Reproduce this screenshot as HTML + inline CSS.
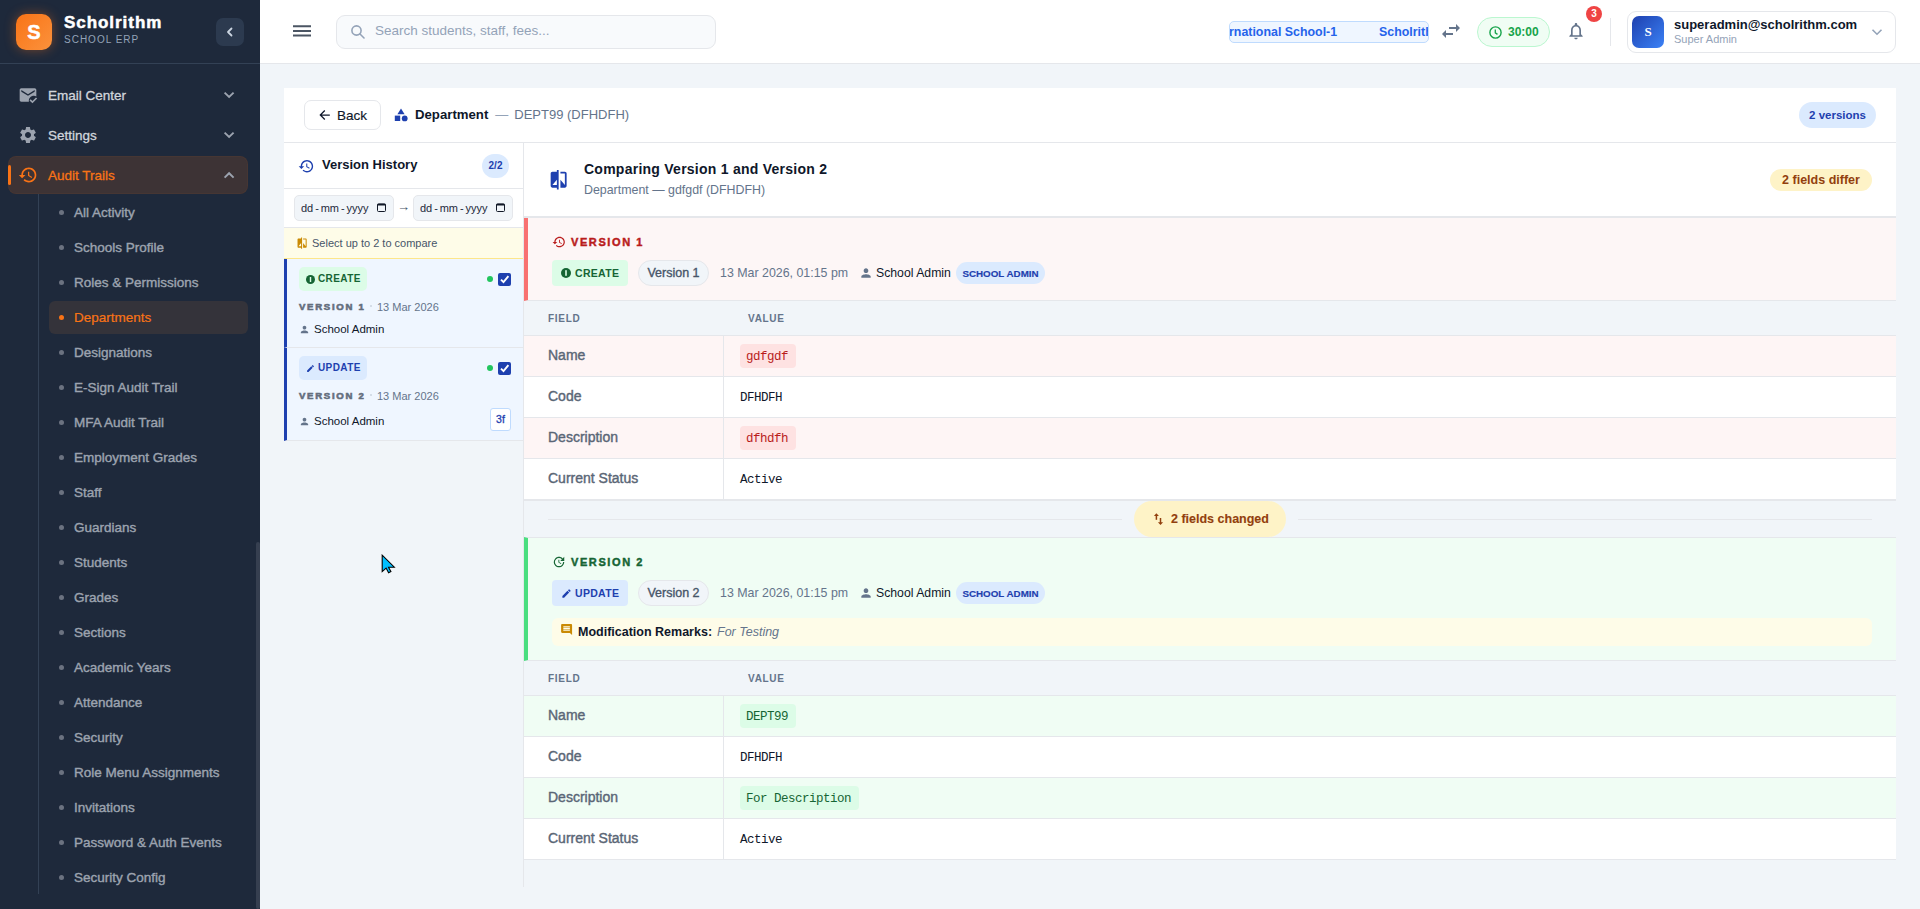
<!DOCTYPE html>
<html><head><meta charset="utf-8">
<style>
*{box-sizing:border-box;margin:0;padding:0}
html,body{width:1920px;height:909px;overflow:hidden;background:#f1f5f9;font-family:"Liberation Sans",sans-serif;color:#0f172a}
.a{position:absolute}
svg{display:block}
#sb{position:absolute;left:0;top:0;width:260px;height:909px;background:#1e293b;overflow:hidden}
#sb .hdr{position:absolute;left:0;top:0;width:260px;height:64px;border-bottom:1px solid #334155}
.logo{position:absolute;left:16px;top:14px;width:36px;height:36px;border-radius:10px;background:linear-gradient(135deg,#f97316,#fb923c);box-shadow:0 0 12px rgba(249,115,22,.4);color:#fff;font-weight:bold;font-size:20px;text-align:center;line-height:37px;-webkit-text-stroke:0.5px #fff}
.brand{position:absolute;left:64px;top:13px;font-size:17px;font-weight:bold;color:#fff;line-height:20px;letter-spacing:0.95px;-webkit-text-stroke:0.5px #fff}
.brand2{position:absolute;left:64px;top:34px;font-size:10px;color:#94a3b8;letter-spacing:1px;line-height:11px}
.collapse{position:absolute;left:216px;top:18px;width:28px;height:28px;border-radius:7px;background:#2c3a4f}
.mi{position:absolute;left:8px;width:240px;height:38px;border-radius:8px}
.mi .t{position:absolute;left:40px;top:1px;line-height:38px;font-size:13.5px;color:#d1d5db;-webkit-text-stroke:0.3px #d1d5db}
.mi svg.ic{position:absolute;left:10px;top:9px}
.mi svg.ch{position:absolute;left:214px;top:14px}
.mi.act{background:#3d3335;box-shadow:inset 0 0 0 1px rgba(249,115,22,.05)}
.mi.act .t{color:#f97316;-webkit-text-stroke:0.3px #f97316}
.mi.act .bar{position:absolute;left:0;top:9px;width:3px;height:20px;background:#f97316;border-radius:2px}
.subline{position:absolute;left:38px;top:194px;width:1px;height:700px;background:#334155}
.sub{position:absolute;left:49px;width:199px;height:33px;border-radius:6px}
.sub .d{position:absolute;left:10px;top:14px;width:5px;height:5px;border-radius:50%;background:#6b7280}
.sub .t{position:absolute;left:25px;top:0;line-height:33px;font-size:13.5px;color:#9ca3af;-webkit-text-stroke:0.4px #9ca3af}
.sub.act{background:#34333a}
.sub.act .d{background:#f97316}
.sub.act .t{color:#f97316;-webkit-text-stroke:0.2px #f97316}
.sbscroll{position:absolute;left:256px;top:542px;width:4px;height:367px;background:#363f50;border-radius:2px}
#top{position:absolute;left:260px;top:0;width:1660px;height:64px;background:#fff;border-bottom:1px solid #e5e7eb}
</style></head><body>
<div id="sb">
  <div class="hdr">
    <div class="logo">S</div>
    <div class="brand">Scholrithm</div>
    <div class="brand2">SCHOOL ERP</div>
    <div class="collapse"><svg width="28" height="28" viewBox="0 0 28 28"><path d="M15.5 10.5l-3.5 3.5 3.5 3.5" stroke="#cbd5e1" stroke-width="1.8" fill="none" stroke-linecap="round" stroke-linejoin="round"/></svg></div>
  </div>
  <div class="mi" style="top:76px"><svg class="ic" width="20" height="20" viewBox="0 0 24 24"><path fill="#9ca3af" d="M13 19c0-3.31 2.69-6 6-6 1.1 0 2.12.3 3 .81V6c0-1.1-.9-2-2-2H4c-1.1 0-2 .9-2 2v12c0 1.1.9 2 2 2h9.09c-.05-.33-.09-.66-.09-1zM4 8V6l8 5 8-5v2l-8 5-8-5zm13.34 14l-3.54-3.54 1.41-1.41 2.12 2.12 4.24-4.24L23 16.34 17.34 22z"/></svg><span class="t">Email Center</span><svg class="ch" width="14" height="10" viewBox="0 0 14 10"><path d="M2.6 2.6L7.1 7 11.6 2.6" stroke="#9ca3af" stroke-width="1.9" fill="none"/></svg></div>
  <div class="mi" style="top:116px"><svg class="ic" width="20" height="20" viewBox="0 0 24 24"><path fill="#9ca3af" d="M19.14 12.94c.04-.3.06-.61.06-.94 0-.32-.02-.64-.07-.94l2.03-1.58c.18-.14.23-.41.12-.61l-1.92-3.32c-.12-.22-.37-.29-.59-.22l-2.39.96c-.5-.38-1.03-.7-1.62-.94l-.36-2.54c-.04-.24-.24-.41-.48-.41h-3.84c-.24 0-.43.17-.47.41l-.36 2.54c-.59.24-1.13.57-1.62.94l-2.39-.96c-.22-.08-.47 0-.59.22L2.74 8.87c-.12.21-.08.47.12.61l2.03 1.58c-.05.3-.09.63-.09.94s.02.64.07.94l-2.03 1.58c-.18.14-.23.41-.12.61l1.92 3.32c.12.22.37.29.59.22l2.39-.96c.5.38 1.03.7 1.62.94l.36 2.54c.05.24.24.41.48.41h3.84c.24 0 .44-.17.47-.41l.36-2.54c.59-.24 1.13-.56 1.62-.94l2.39.96c.22.08.47 0 .59-.22l1.92-3.32c.12-.22.07-.47-.12-.61l-2.01-1.58zM12 15.6c-1.98 0-3.6-1.62-3.6-3.6s1.62-3.6 3.6-3.6 3.6 1.62 3.6 3.6-1.62 3.6-3.6 3.6z"/></svg><span class="t">Settings</span><svg class="ch" width="14" height="10" viewBox="0 0 14 10"><path d="M2.6 2.6L7.1 7 11.6 2.6" stroke="#9ca3af" stroke-width="1.9" fill="none"/></svg></div>
  <div class="mi act" style="top:156px"><span class="bar"></span><svg class="ic" width="20" height="20" viewBox="0 0 24 24"><path fill="#f97316" d="M13 3c-4.97 0-9 4.03-9 9H1l3.89 3.89.07.14L9 12H6c0-3.87 3.13-7 7-7s7 3.13 7 7-3.13 7-7 7c-1.93 0-3.68-.79-4.94-2.06l-1.42 1.42C8.27 19.99 10.51 21 13 21c4.97 0 9-4.03 9-9s-4.03-9-9-9zm-1 5v5l4.28 2.54.72-1.21-3.5-2.08V8H12z"/></svg><span class="t">Audit Trails</span><svg class="ch" width="14" height="10" viewBox="0 0 14 10"><path d="M2.6 7.6L7.1 3.2 11.6 7.6" stroke="#9ca3af" stroke-width="1.9" fill="none"/></svg></div>
  <div class="subline"></div>
<div class="sub" style="top:196px"><span class="d"></span><span class="t">All Activity</span></div>
<div class="sub" style="top:231px"><span class="d"></span><span class="t">Schools Profile</span></div>
<div class="sub" style="top:266px"><span class="d"></span><span class="t">Roles &amp; Permissions</span></div>
<div class="sub act" style="top:301px"><span class="d"></span><span class="t">Departments</span></div>
<div class="sub" style="top:336px"><span class="d"></span><span class="t">Designations</span></div>
<div class="sub" style="top:371px"><span class="d"></span><span class="t">E-Sign Audit Trail</span></div>
<div class="sub" style="top:406px"><span class="d"></span><span class="t">MFA Audit Trail</span></div>
<div class="sub" style="top:441px"><span class="d"></span><span class="t">Employment Grades</span></div>
<div class="sub" style="top:476px"><span class="d"></span><span class="t">Staff</span></div>
<div class="sub" style="top:511px"><span class="d"></span><span class="t">Guardians</span></div>
<div class="sub" style="top:546px"><span class="d"></span><span class="t">Students</span></div>
<div class="sub" style="top:581px"><span class="d"></span><span class="t">Grades</span></div>
<div class="sub" style="top:616px"><span class="d"></span><span class="t">Sections</span></div>
<div class="sub" style="top:651px"><span class="d"></span><span class="t">Academic Years</span></div>
<div class="sub" style="top:686px"><span class="d"></span><span class="t">Attendance</span></div>
<div class="sub" style="top:721px"><span class="d"></span><span class="t">Security</span></div>
<div class="sub" style="top:756px"><span class="d"></span><span class="t">Role Menu Assignments</span></div>
<div class="sub" style="top:791px"><span class="d"></span><span class="t">Invitations</span></div>
<div class="sub" style="top:826px"><span class="d"></span><span class="t">Password &amp; Auth Events</span></div>
<div class="sub" style="top:861px"><span class="d"></span><span class="t">Security Config</span></div>
  <div class="sbscroll"></div>
</div>
<div id="top"></div>
<style>
.ham{left:293px;top:25px}
.search{left:336px;top:15px;width:380px;height:34px;border:1px solid #e5e7eb;border-radius:9px;background:#f8fafc}
.search svg{position:absolute;left:13px;top:8px}
.search .ph{position:absolute;left:38px;top:-1px;line-height:32px;font-size:13.5px;color:#94a3b8}
.marq{left:1229px;top:21px;width:200px;height:22px;border:1px solid #bfdbfe;border-radius:5px;background:#eff6ff;overflow:hidden}
.marq span{position:absolute;top:0;line-height:20px;font-size:12.4px;font-weight:bold;color:#2563eb;white-space:nowrap}
.timer{left:1477px;top:17px;width:73px;height:30px;border:1px solid #bbf7d0;border-radius:15px;background:#f0fdf4}
.timer svg{position:absolute;left:11px;top:8px}
.timer span{position:absolute;left:30px;top:0;line-height:28px;font-size:12px;font-weight:bold;color:#16a34a}
.badge{left:1586px;top:6px;width:16px;height:16px;border-radius:50%;background:#ef4444;color:#fff;font-size:10px;font-weight:bold;text-align:center;line-height:16px}
.vdiv{left:1610px;top:18px;width:1px;height:28px;background:#e5e7eb}
.user{left:1627px;top:11px;width:269px;height:42px;border:1px solid #e5e7eb;border-radius:9px;background:#fff}
.avatar{left:4px;top:4px;width:32px;height:32px;border-radius:7px;background:linear-gradient(135deg,#1e40af,#3b82f6);color:#fff;font-family:"Liberation Serif",serif;font-weight:bold;font-size:13px;text-align:center;line-height:32px}
.uemail{left:46px;top:5px;font-size:13px;font-weight:bold;color:#0f172a;line-height:16px;white-space:nowrap}
.urole{left:46px;top:21px;font-size:11px;color:#94a3b8;line-height:13px}
.card{left:284px;top:88px;width:1612px;height:55px;background:#fff;border-bottom:1px solid #e5e7eb}
.backbtn{left:20px;top:12px;width:77px;height:30px;border:1px solid #e5e7eb;border-radius:7px;background:#fff}
.backbtn svg{position:absolute;left:14px;top:8px}
.backbtn span{position:absolute;left:32px;top:1px;line-height:28px;-webkit-text-stroke:0.15px #0f172a;font-size:13.5px;color:#0f172a}
.crumb{left:131px;top:0;line-height:53px;font-size:13.5px;font-weight:bold;color:#0f172a;white-space:nowrap}
.crumb .g{font-weight:normal;color:#64748b;font-size:13px}
.pillv{left:1515px;top:14px;width:77px;height:26px;border-radius:13px;background:#dbeafe;color:#1e40af;font-size:11.5px;font-weight:bold;text-align:center;line-height:26px}
/* left panel */
.lp{left:284px;top:143px;width:240px;height:744px;border-right:1px solid #e5e7eb}
.lph{left:0;top:0;width:239px;height:46px;background:#fff;border-bottom:1px solid #e5e7eb}
.lph svg{position:absolute}
.lph .t{position:absolute;left:38px;top:-1px;line-height:45px;font-size:13px;font-weight:bold;color:#0f172a}
.lph .cnt{position:absolute;left:198px;top:11px;width:27px;height:24px;border-radius:12px;background:#dbeafe;color:#1e40af;font-size:10px;font-weight:bold;text-align:center;line-height:24px}
.dates{left:0;top:46px;width:239px;height:39px;background:#fff;border-bottom:1px solid #e5e7eb}
.date{top:6px;width:100px;height:26px;border:1px solid #e5e7eb;border-radius:5px;background:#f1f5f9}
.date span{position:absolute;left:6px;top:0;line-height:24px;font-size:11px;color:#1e293b;letter-spacing:0px;white-space:nowrap}
.date i{font-style:normal;margin:0 1.9px}
.date svg{position:absolute;left:82px;top:7px}
.notice{left:0;top:85px;width:239px;height:31px;background:#fefce8;border-bottom:1px solid #fde68a}
.notice svg{position:absolute}
.notice span{position:absolute;left:28px;top:0px;line-height:31px;font-size:11px;color:#475569}
.item{left:0;width:239px;background:#eff6ff;border-bottom:1px solid #e5e7eb;border-left:3px solid #1e40af}
.tag{position:absolute;left:12px;width:68px;height:24px;border-radius:5px;font-size:10px;font-weight:bold;letter-spacing:0.4px;line-height:24px}
.tag.cr{background:#dcfce7;color:#166534}
.tag.up{background:#dbeafe;color:#1e40af}
.tag svg{position:absolute;left:7px;top:8px}
.tag span{position:absolute;left:19px;top:0}
.gdot{position:absolute;left:200px;width:6px;height:6px;border-radius:50%;background:#22c55e}
.chk{position:absolute;left:211px;width:13px;height:13px;border-radius:2px;background:#1e40af}
.chk svg{position:absolute;left:1px;top:1px}
.vlab{position:absolute;left:12px;font-size:9.6px;font-weight:bold;letter-spacing:1.7px;color:#646e7d;line-height:12px;white-space:nowrap;-webkit-text-stroke:0.6px #646e7d}
.vdate{position:absolute;left:90px;font-size:11px;color:#64748b;line-height:12px;white-space:nowrap}
.vdot{position:absolute;left:83px;width:2px;height:2px;border-radius:50%;background:#cbd5e1}
.who{position:absolute;left:12px;font-size:11.5px;color:#0f172a;line-height:13px;white-space:nowrap}
.who svg{position:absolute;left:0px;top:1px}
.who span{position:absolute;left:15px;top:0}
.f3{position:absolute;left:203px;width:21px;height:23px;border:1px solid #bfdbfe;border-radius:3px;background:#fff;color:#1e40af;font-size:10.5px;-webkit-text-stroke:0.3px #1e40af;text-align:center;line-height:21px}
/* compare panel */
.cp{left:524px;top:143px;width:1372px;height:744px}
.cph{left:0;top:0;width:1372px;height:75px;background:#fff;border-bottom:2px solid #e5e7eb}
.cph svg{position:absolute}
.cph .t{position:absolute;left:60px;top:18px;font-size:14px;font-weight:bold;letter-spacing:0.25px;color:#0f172a;line-height:16px;white-space:nowrap}
.cph .s{position:absolute;left:60px;top:40px;font-size:12.4px;color:#64748b;line-height:14px;white-space:nowrap}
.cph .diff{position:absolute;left:1246px;top:26px;width:102px;height:22px;border-radius:11px;background:#fef3c7;color:#92400e;font-size:12.5px;font-weight:bold;text-align:center;line-height:22px}
.blk{left:0;width:1372px;border-left:4px solid #f87171;background:#fdf6f6;border-bottom:1px solid #e5e7eb}
.blk.g{border-left-color:#4ade80;background:#f0fdf4}
.bt{position:absolute;left:43px;font-size:11px;font-weight:bold;letter-spacing:1.6px;line-height:12px;white-space:nowrap;-webkit-text-stroke:0.45px currentColor}
.bt svg{position:absolute;left:-19px;top:-1px}
.meta{position:absolute;left:24px;height:26px;width:1340px}
.mtag{position:absolute;left:0;top:0;width:76px;height:26px;border-radius:4px;font-size:10.5px;font-weight:bold;letter-spacing:0.3px;line-height:27px}
.mtag svg{position:absolute;left:9px;top:8px}
.mtag span{position:absolute;left:23px;top:0}
.mver{position:absolute;left:86px;top:0;width:71px;height:26px;border:1px solid #e5e7eb;border-radius:13px;background:#f1f5f9;color:#475569;font-size:12.5px;font-weight:normal;-webkit-text-stroke:0.35px #475569;text-align:center;line-height:24px}
.mdate{position:absolute;left:168px;top:1px;line-height:25px;font-size:12.4px;color:#64748b;white-space:nowrap}
.mwho{position:absolute;left:308px;top:1px;line-height:25px;font-size:12.25px;color:#0f172a;white-space:nowrap}
.mwho svg{position:absolute;left:-1px;top:5px}
.mwho span{position:absolute;left:16px;top:0}
.mrole{position:absolute;left:404px;top:2px;width:89px;height:22px;border-radius:11px;background:#dbeafe;color:#1e40af;font-size:9.8px;font-weight:bold;text-align:center;line-height:23px;-webkit-text-stroke:0.15px #1e40af}
.remark{position:absolute;left:24px;top:80px;width:1320px;height:28px;border-radius:6px;background:#fefce8}
.remark svg{position:absolute}
.remark .k{position:absolute;left:26px;top:0;line-height:28px;font-size:12.5px;font-weight:bold;color:#0f172a;white-space:nowrap}
.remark .v{position:absolute;left:165px;top:0;line-height:28px;font-size:12.5px;font-style:italic;color:#64748b;white-space:nowrap}
.th{left:0;width:1372px;height:35px;background:#f1f5f9;border-bottom:1px solid #e5e7eb}
.th span{position:absolute;top:1px;line-height:34px;font-size:10px;font-weight:bold;letter-spacing:0.7px;color:#64748b}
.tr{left:0;width:1372px;height:41px;border-bottom:1px solid #e5e7eb;background:#fff}
.tr.r{background:#fef5f5}
.tr.gr{background:#f0fdf4}
.tr .k{position:absolute;left:24px;top:-1px;line-height:40px;font-size:14px;font-weight:normal;color:#5a6676;-webkit-text-stroke:0.4px #5a6676}
.tr .cd{position:absolute;left:199px;top:0;width:1px;height:40px;background:#e5e7eb}
.tr .v{position:absolute;left:216px;top:0;line-height:43px;font-family:"Liberation Mono",monospace;font-size:12.5px;letter-spacing:-0.5px;color:#0f172a;white-space:nowrap}
.tr .p{position:absolute;left:216px;top:8px;height:24px;border-radius:4px;padding:0 7.5px 0 6px;line-height:26px;font-family:"Liberation Mono",monospace;font-size:12.5px;letter-spacing:-0.5px;white-space:nowrap}
.tr.r .p{background:#fee2e2;color:#b91c1c}
.tr.gr .p{background:#dcfce7;color:#166534}
.sep{left:0;width:1372px;height:37px;border-top:1px solid #e5e7eb}
.sep .ln{position:absolute;top:18px;height:1px;background:#e5e7eb}
.sep .pill{position:absolute;left:610px;top:0px;width:152px;height:36px;border-radius:18px;background:#fef3c7;color:#92400e;font-size:12.5px;font-weight:bold;line-height:36px;-webkit-text-stroke:0.1px #92400e}
.sep .pill svg{position:absolute;left:19px;top:12px}
.sep .pill span{position:absolute;left:37px;top:0}
</style>
<div id="topc">
<svg class="a ham" width="18" height="12" viewBox="0 0 18 12"><path d="M0 1.2h18M0 5.9h18M0 10.6h18" stroke="#4b5563" stroke-width="2"/></svg>
<div class="a search"><svg width="16" height="16" viewBox="0 0 16 16"><circle cx="6.5" cy="6.5" r="4.6" stroke="#94a3b8" stroke-width="1.6" fill="none"/><path d="M10 10l4 4" stroke="#94a3b8" stroke-width="1.6" stroke-linecap="round"/></svg><span class="ph">Search students, staff, fees...</span></div>
<div class="a marq"><span style="left:-1px;letter-spacing:0px">rnational School-1</span><span style="left:149px">Scholrithm International School-1</span></div>
<svg class="a" style="left:1439px;top:19px" width="24" height="24" viewBox="0 0 24 24"><path fill="#64748b" d="M6.99 11L3 15l3.99 4v-3H14v-2H6.99v-3zM21 9l-3.99-4v3H10v2h7.01v3L21 9z"/></svg>
<div class="a timer"><svg width="13" height="13" viewBox="0 0 13 13"><circle cx="6.5" cy="6.5" r="5.6" stroke="#16a34a" stroke-width="1.4" fill="none"/><path d="M6.3 3.4v3.4l2.2 1.6" stroke="#16a34a" stroke-width="1.3" fill="none"/></svg><span>30:00</span></div>
<svg class="a" style="left:1566px;top:21px" width="20" height="20" viewBox="0 0 24 24"><path fill="#64748b" d="M12 22c1.1 0 2-.9 2-2h-4c0 1.1.89 2 2 2zm6-6v-5c0-3.07-1.64-5.64-4.5-6.32V4c0-.83-.67-1.5-1.5-1.5s-1.5.67-1.5 1.5v.68C7.63 5.36 6 7.92 6 11v5l-2 2v1h16v-1l-2-2zm-2 1H8v-6c0-2.48 1.51-4.5 4-4.5s4 2.02 4 4.5v6z"/></svg>
<div class="a badge">3</div>
<div class="a vdiv"></div>
<div class="a user"><div class="a avatar">S</div><div class="a uemail">superadmin@scholrithm.com</div><div class="a urole">Super Admin</div><svg class="a" style="left:243px;top:16px" width="12" height="8" viewBox="0 0 12 8"><path d="M1.5 1.8L6 6.2l4.5-4.4" stroke="#94a3b8" stroke-width="1.6" fill="none"/></svg></div>
</div>

<div class="a card">
  <div class="a backbtn"><svg width="12" height="12" viewBox="0 0 12 12"><path d="M10.8 6H1.6M5.8 1.5L1.3 6l4.5 4.5" stroke="#0f172a" stroke-width="1.25" fill="none"/></svg><span>Back</span></div>
  <svg class="a" style="left:110px;top:20px" width="14" height="14" viewBox="0 0 14 14"><path d="M7 0.5L10.6 6.2H3.4z" fill="#1e40af"/><rect x="0.8" y="7.6" width="5.4" height="5.4" fill="#1e40af"/><circle cx="10.7" cy="10.4" r="2.9" fill="#1e40af"/></svg>
  <div class="a crumb"><span style="font-size:13.2px">Department</span><span class="g" style="margin-left:7px;color:#94a3b8">—</span><span class="g" style="margin-left:6px">DEPT99 (DFHDFH)</span></div>
  <div class="a pillv">2 versions</div>
</div>

<div class="a lp">
  <div class="a lph"><svg width="16.5" height="16.5" viewBox="0 0 24 24" style="left:13.6px;top:14.8px"><path fill="#1e40af" d="M13 3c-4.97 0-9 4.03-9 9H1l3.89 3.89.07.14L9 12H6c0-3.87 3.13-7 7-7s7 3.13 7 7-3.13 7-7 7c-1.93 0-3.68-.79-4.94-2.06l-1.42 1.42C8.27 19.990 10.510 21 13 21c4.97 0 9-4.03 9-9s-4.03-9-9-9zm-1 5v5l4.28 2.54.72-1.21-3.5-2.08V8H12z"/></svg><span class="t">Version History</span><span class="cnt">2/2</span></div>
  <div class="a dates">
    <div class="a date" style="left:10px"><span>dd<i>-</i>mm<i>-</i>yyyy</span><svg width="9" height="9" viewBox="0 0 9 9"><rect x="0.5" y="0.9" width="8" height="7.6" rx="1" stroke="#111827" stroke-width="1" fill="none"/><rect x="0.5" y="0.9" width="8" height="1.6" fill="#111827"/></svg></div>
    <span class="a" style="left:113px;top:-1px;line-height:38px;font-size:13px;color:#475569">→</span>
    <div class="a date" style="left:129px"><span>dd<i>-</i>mm<i>-</i>yyyy</span><svg width="9" height="9" viewBox="0 0 9 9"><rect x="0.5" y="0.9" width="8" height="7.6" rx="1" stroke="#111827" stroke-width="1" fill="none"/><rect x="0.5" y="0.9" width="8" height="1.6" fill="#111827"/></svg></div>
  </div>
  <div class="a notice"><svg width="12.2" height="12.2" viewBox="0 0 24 24" style="left:11.5px;top:8.5px"><path fill="#ca8a04" d="M10 3H5c-1.1 0-2 .9-2 2v14c0 1.1.9 2 2 2h5v2h2V1h-2v2zm0 15H5l5-6v6zm9-15h-5v2h5v13l-5-6v9h5c1.1 0 2-.9 2-2V5c0-1.1-.9-2-2-2z"/></svg><span>Select up to 2 to compare</span></div>
  <div class="a item" style="top:116px;height:89px">
    <div class="tag cr" style="top:8px"><svg width="9" height="9" viewBox="0 0 10 10"><circle cx="5" cy="5" r="5" fill="#166534"/><rect x="4.2" y="2.2" width="1.6" height="5.6" fill="#dcfce7"/></svg><span>CREATE</span></div>
    <span class="gdot" style="top:17px"></span>
    <div class="chk" style="top:14px"><svg width="11" height="11" viewBox="0 0 11 11"><path d="M2 5.6l2.5 2.5L9.4 2.2" stroke="#fff" stroke-width="1.9" fill="none"/></svg></div>
    <span class="vlab" style="top:42px">VERSION 1</span><span class="vdot" style="top:46px"></span><span class="vdate" style="top:42px">13 Mar 2026</span>
    <div class="who" style="top:64px"><svg width="11" height="11" viewBox="0 0 24 24"><path fill="#64748b" d="M12 12c2.21 0 4-1.79 4-4s-1.79-4-4-4-4 1.79-4 4 1.79 4 4 4zm0 2c-2.67 0-8 1.34-8 4v2h16v-2c0-2.66-5.33-4-8-4z"/></svg><span>School Admin</span></div>
  </div>
  <div class="a item" style="top:205px;height:93px">
    <div class="tag up" style="top:8px"><svg width="9" height="9" viewBox="0 0 24 24"><path fill="#1e40af" d="M3 17.25V21h3.75L17.81 9.94l-3.75-3.75L3 17.25zM20.71 7.04a1 1 0 000-1.41l-2.34-2.34a1 1 0 00-1.41 0l-1.83 1.83 3.75 3.75 1.83-1.83z"/></svg><span>UPDATE</span></div>
    <span class="gdot" style="top:17px"></span>
    <div class="chk" style="top:14px"><svg width="11" height="11" viewBox="0 0 11 11"><path d="M2 5.6l2.5 2.5L9.4 2.2" stroke="#fff" stroke-width="1.9" fill="none"/></svg></div>
    <span class="vlab" style="top:42px">VERSION 2</span><span class="vdot" style="top:46px"></span><span class="vdate" style="top:42px">13 Mar 2026</span>
    <div class="who" style="top:67px"><svg width="11" height="11" viewBox="0 0 24 24"><path fill="#64748b" d="M12 12c2.21 0 4-1.79 4-4s-1.79-4-4-4-4 1.79-4 4 1.79 4 4 4zm0 2c-2.67 0-8 1.34-8 4v2h16v-2c0-2.66-5.33-4-8-4z"/></svg><span>School Admin</span></div>
    <div class="f3" style="top:60px">3f</div>
  </div>
</div>
<div class="a cp">
  <div class="a cph"><svg width="21.3" height="21.3" viewBox="0 0 24 24" style="left:24.3px;top:26.1px"><path fill="#1e40af" d="M10 3H5c-1.1 0-2 .9-2 2v14c0 1.1.9 2 2 2h5v2h2V1h-2v2zm0 15H5l5-6v6zm9-15h-5v2h5v13l-5-6v9h5c1.1 0 2-.9 2-2V5c0-1.1-.9-2-2-2z"/></svg>
    <span class="t">Comparing Version 1 and Version 2</span>
    <span class="s">Department — gdfgdf (DFHDFH)</span>
    <span class="diff">2 fields differ</span>
  </div>
  <div class="a blk" style="top:75px;height:83px">
    <span class="bt" style="top:18px;color:#b91c1c"><svg width="14" height="14" viewBox="0 0 24 24"><path fill="#b91c1c" d="M13 3c-4.97 0-9 4.03-9 9H1l3.89 3.89.07.14L9 12H6c0-3.87 3.13-7 7-7s7 3.13 7 7-3.13 7-7 7c-1.93 0-3.68-.79-4.94-2.06l-1.42 1.42C8.27 19.99 10.51 21 13 21c4.97 0 9-4.03 9-9s-4.03-9-9-9zm-1 5v5l4.28 2.54.72-1.21-3.5-2.08V8H12z"/></svg>VERSION 1</span>
    <div class="meta" style="top:42px">
      <div class="mtag" style="background:#dcfce7;color:#166534"><svg width="10" height="10" viewBox="0 0 10 10"><circle cx="5" cy="5" r="5" fill="#166534"/><rect x="4.2" y="2.2" width="1.6" height="5.6" fill="#dcfce7"/></svg><span>CREATE</span></div>
      <div class="mver">Version 1</div>
      <span class="mdate">13 Mar 2026, 01:15 pm</span>
      <span class="mwho"><svg width="14" height="14" viewBox="0 0 24 24"><path fill="#64748b" d="M12 12c2.21 0 4-1.79 4-4s-1.79-4-4-4-4 1.79-4 4 1.79 4 4 4zm0 2c-2.67 0-8 1.34-8 4v2h16v-2c0-2.66-5.33-4-8-4z"/></svg><span>School Admin</span></span>
      <span class="mrole">SCHOOL ADMIN</span>
    </div>
  </div>
  <div class="a th" style="top:158px"><span style="left:24px">FIELD</span><span style="left:224px">VALUE</span></div>
  <div class="a tr r" style="top:193px"><span class="k">Name</span><span class="cd"></span><span class="p">gdfgdf</span></div>
  <div class="a tr" style="top:234px"><span class="k">Code</span><span class="cd"></span><span class="v">DFHDFH</span></div>
  <div class="a tr r" style="top:275px"><span class="k">Description</span><span class="cd"></span><span class="p">dfhdfh</span></div>
  <div class="a tr" style="top:316px"><span class="k">Current Status</span><span class="cd"></span><span class="v">Active</span></div>
  <div class="a sep" style="top:357px"><span class="ln" style="left:24px;width:574px"></span><span class="ln" style="left:774px;width:574px"></span>
    <span class="pill"><svg width="12" height="13" viewBox="0 0 12 13"><path d="M3.4 2v4.8" stroke="#92400e" stroke-width="1.5"/><path d="M0.9 3L3.4 0.2 5.9 3z" fill="#92400e"/><path d="M7.5 5v5.2" stroke="#92400e" stroke-width="1.5"/><path d="M4.9 9.2L7.5 12 10.1 9.2z" fill="#92400e"/></svg><span>2 fields changed</span></span></div>
  <div class="a blk g" style="top:394px;height:124px;border-top:1px solid #e5e7eb">
    <span class="bt" style="top:18px;color:#166534"><svg width="14" height="14" viewBox="0 0 24 24"><path fill="#166534" d="M21 10.12h-6.78l2.74-2.82c-2.73-2.7-7.15-2.8-9.88-.1-2.73 2.71-2.73 7.08 0 9.79s7.15 2.71 9.88 0C18.32 15.65 19 14.08 19 12.1h2c0 1.98-.88 4.55-2.64 6.29-3.51 3.48-9.21 3.48-12.72 0-3.5-3.47-3.53-9.11-.02-12.58s9.14-3.47 12.65 0L21 3v7.12zM12.5 8v4.25l3.5 2.08-.72 1.21L11 13V8h1.5z"/></svg>VERSION 2</span>
    <div class="meta" style="top:42px">
      <div class="mtag" style="background:#dbeafe;color:#1e40af"><svg width="11" height="11" viewBox="0 0 24 24"><path fill="#1e40af" d="M3 17.25V21h3.75L17.81 9.94l-3.75-3.75L3 17.25zM20.71 7.04a1 1 0 000-1.41l-2.34-2.34a1 1 0 00-1.41 0l-1.83 1.83 3.75 3.75 1.83-1.83z"/></svg><span>UPDATE</span></div>
      <div class="mver">Version 2</div>
      <span class="mdate">13 Mar 2026, 01:15 pm</span>
      <span class="mwho"><svg width="14" height="14" viewBox="0 0 24 24"><path fill="#64748b" d="M12 12c2.21 0 4-1.79 4-4s-1.79-4-4-4-4 1.79-4 4 1.79 4 4 4zm0 2c-2.67 0-8 1.34-8 4v2h16v-2c0-2.66-5.33-4-8-4z"/></svg><span>School Admin</span></span>
      <span class="mrole">SCHOOL ADMIN</span>
    </div>
    <div class="remark"><svg width="13.2" height="13.2" viewBox="0 0 24 24" style="left:7.8px;top:4.7px"><path fill="#ca8a04" d="M21.99 4c0-1.1-.89-2-1.99-2H4c-1.1 0-2 .9-2 2v12c0 1.1.9 2 2 2h14l4 4-.01-18zM18 14H6v-2h12v2zm0-3H6V9h12v2zm0-3H6V6h12v2z"/></svg><span class="k">Modification Remarks:</span><span class="v">For Testing</span></div>
  </div>
  <div class="a th" style="top:518px"><span style="left:24px">FIELD</span><span style="left:224px">VALUE</span></div>
  <div class="a tr gr" style="top:553px"><span class="k">Name</span><span class="cd"></span><span class="p">DEPT99</span></div>
  <div class="a tr" style="top:594px"><span class="k">Code</span><span class="cd"></span><span class="v">DFHDFH</span></div>
  <div class="a tr gr" style="top:635px"><span class="k">Description</span><span class="cd"></span><span class="p">For Description</span></div>
  <div class="a tr" style="top:676px"><span class="k">Current Status</span><span class="cd"></span><span class="v">Active</span></div>
</div>
<svg class="a" style="left:381px;top:554px" width="16" height="22" viewBox="0 0 16 22"><path d="M1.2 1.2v16.4l3.9-3.5 2.5 4.6 2.3-1.1-2.4-4.4h5.8z" fill="#00bfff" stroke="#000" stroke-width="1.1" stroke-linejoin="miter"/></svg>

</body></html>
